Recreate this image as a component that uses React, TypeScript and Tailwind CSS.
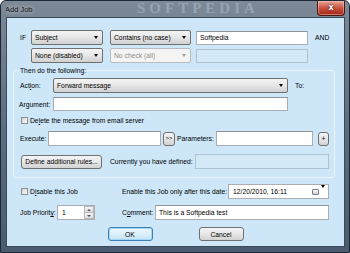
import React from "react";

// Windows 7 style "Add Job" dialog, scaled down to the screenshot size

type BoxProps = { className?: string; text?: React.ReactNode; disabled?: boolean };

function Arrow({ muted }: { muted?: boolean }) {
  return (
    <span
      className={`h-0 w-0 shrink-0 border-x-[2.5px] border-t-[3px] border-x-transparent ${
        muted ? "border-t-[#a0a0a0]" : "border-t-black"
      }`}
    />
  );
}

function Combo({ className, text, disabled }: BoxProps) {
  return (
    <div
      className={`flex h-[15px] shrink-0 items-center justify-between rounded-[2px] border pl-[3px] pr-[4px] ${
        disabled
          ? "border-[#b8bcc0] bg-[#f4f4f4] text-[#8d8d8d]"
          : "border-[#707070] bg-linear-to-b from-[#f4f4f4] via-[#e6e6e6] to-[#d0d0d0]"
      } ${className ?? ""}`}
    >
      <span className="truncate">{text}</span>
      <Arrow muted={disabled} />
    </div>
  );
}

function TextBox({ className, text, disabled }: BoxProps) {
  return (
    <div
      className={`flex h-[14px] shrink-0 items-center border pl-[3px] ${
        disabled ? "border-[#aec2d1] bg-[#d3e9f7]" : "border-[#abadb3] border-t-[#8f939a] bg-white"
      } ${className ?? ""}`}
    >
      {text}
    </div>
  );
}

function Button({
  className,
  children,
  primary,
}: {
  className?: string;
  children: React.ReactNode;
  primary?: boolean;
}) {
  return (
    <div
      className={`flex shrink-0 items-center justify-center rounded-[3px] border ${
        primary
          ? "border-[#3c7fb1] bg-linear-to-b from-[#f2f9fe] to-[#c4e3f5] shadow-[inset_0_0_0_1px_#9fd7f7]"
          : "border-[#707070] bg-linear-to-b from-[#f4f4f4] via-[#e7e7e7] to-[#d1d1d1]"
      } ${className ?? ""}`}
    >
      {children}
    </div>
  );
}

function Check() {
  return <span className="h-[7px] w-[7px] shrink-0 border border-[#8e8f8f] bg-linear-to-br from-[#d6d6d6] to-[#fafafa]" />;
}

export default function App() {
  return (
    <div className="flex h-[253px] w-[350px] flex-col overflow-hidden rounded-t-[6px] border border-[#1d2836] bg-linear-to-b from-[#7d8996] via-[#5d6d80] to-[#4a5b70] pb-[5px] pl-[5px] pr-[4px] font-['Liberation_Sans',Arial,sans-serif] text-[6.75px] leading-[9px] text-black">
      {/* title bar */}
      <div className="flex h-[16px] shrink-0 items-start overflow-hidden">
        <span className="-ml-[1px] w-[132px] shrink-0 pt-[4px] text-[7.5px] text-[#101010] [text-shadow:0_0_4px_rgba(255,255,255,0.9)]">
          Add Job
        </span>
        <span className="w-[150px] shrink-0 font-['Liberation_Serif',serif] text-[15px] leading-[15px] font-bold tracking-[4px] text-[#b8c8dc]/45">
          SOFTPEDIA
        </span>
        <div className="flex-1" />
        <div className="flex h-[15px] w-[28px] shrink-0 items-center justify-center rounded-b-[4px] border border-t-0 border-[#4a1710] bg-linear-to-b from-[#e7a79b] via-[#c8503f] to-[#a32514] shadow-[inset_0_0_0_1px_rgba(255,200,190,0.5)]">
          <span className="font-['DejaVu_Sans',sans-serif] text-[8px] leading-[8px] font-bold text-white [text-shadow:0_0_2px_#400]">
            x
          </span>
        </div>
      </div>

      {/* client area */}
      <div className="flex flex-1 flex-col border border-[#3a495b] bg-[#cde7f8] pt-[12px]">
        <div className="flex items-center pl-[13px]">
          <span className="w-[11px] shrink-0">IF</span>
          <Combo className="w-[72px]" text="Subject" />
          <Combo className="ml-[7px] w-[81px]" text="Contains (no case)" />
          <TextBox className="ml-[5px] w-[112px]" text="Softpedia" />
          <span className="ml-[7px]">AND</span>
        </div>
        <div className="mt-[3px] flex items-center pl-[24px]">
          <Combo className="w-[72px]" text="None (disabled)" />
          <Combo className="ml-[7px] w-[81px]" text="No check (all)" disabled />
          <TextBox className="ml-[5px] w-[112px]" disabled />
        </div>

        <fieldset className="ml-[6px] mt-[3px] w-[322px] rounded-[2px] border border-[#e9f4fb] pb-[8px]">
          <legend className="ml-[5px] px-[1px] leading-[9px]">Then do the following:</legend>
          <div className="mt-[3px] flex items-center pl-[6px]">
            <span className="w-[33px] shrink-0">
              Act<u>i</u>on:
            </span>
            <Combo className="h-[14px] w-[235px]" text="Forward message" />
            <span className="ml-[7px]">To:</span>
          </div>
          <div className="mt-[4px] flex items-center pl-[5px]">
            <span className="w-[34px] shrink-0">Argument:</span>
            <TextBox className="w-[235px]" />
          </div>
          <div className="mt-[5px] flex h-[9px] items-center pl-[7px]">
            <Check />
            <span className="ml-[2px]">
              De<u>l</u>ete the message from email server
            </span>
          </div>
          <div className="mt-[6px] flex items-center pl-[6px]">
            <span className="w-[28px] shrink-0">Execute:</span>
            <TextBox className="h-[15px] w-[113px]" />
            <Button className="ml-[2px] h-[14px] w-[12px] rounded-[2px] text-[6px]">&gt;&gt;</Button>
            <span className="ml-[2px] w-[39px] shrink-0">Parameters:</span>
            <TextBox className="h-[15px] w-[97px]" />
            <Button className="ml-[5px] h-[14px] w-[11px] rounded-[2px]">+</Button>
          </div>
          <div className="mt-[8px] flex items-center pl-[7px]">
            <Button className="h-[14px] w-[81px]">Define additional rules...</Button>
            <span className="ml-[8px] w-[85px] shrink-0">Currently you have defined:</span>
            <TextBox className="h-[15px] w-[134px]" disabled />
          </div>
        </fieldset>

        <div className="mt-[6px] flex items-center pl-[14px]">
          <div className="flex w-[101px] shrink-0 items-center">
            <Check />
            <span className="ml-[2px]">
              D<u>i</u>sable this Job
            </span>
          </div>
          <span className="w-[106px] shrink-0">Enable this Job only after this date:</span>
          <div className="flex h-[15px] w-[101px] items-center border border-[#abadb3] bg-white pl-[4px] pr-[3px]">
            <span>12/20/2010, 16:11</span>
            <div className="flex-1" />
            <span className="h-[6px] w-[7px] rounded-[1px] border border-[#7a8088] bg-linear-to-b from-[#ffffff] to-[#c9ced4]" />
            <span className="ml-[2px]">
              <Arrow />
            </span>
          </div>
        </div>

        <div className="mt-[6px] flex items-center pl-[13px]">
          <span className="w-[37px] shrink-0">
            Job Priorit<u>y</u>:
          </span>
          <div className="flex h-[15px] w-[38px] shrink-0 items-center border border-[#abadb3] bg-white pl-[4px]">
            <span className="flex-1">1</span>
            <div className="flex h-full w-[10px] flex-col">
              <div className="flex flex-1 items-center justify-center border border-[#b7babe] bg-linear-to-b from-[#f6f6f6] to-[#dcdcdc]">
                <span className="h-0 w-0 border-x-[2px] border-b-[2px] border-x-transparent border-b-[#555]" />
              </div>
              <div className="flex flex-1 items-center justify-center border border-t-0 border-[#b7babe] bg-linear-to-b from-[#f6f6f6] to-[#dcdcdc]">
                <span className="h-0 w-0 border-x-[2px] border-t-[2px] border-x-transparent border-t-[#555]" />
              </div>
            </div>
          </div>
          <span className="ml-[27px] w-[33px] shrink-0">
            C<u>o</u>mment:
          </span>
          <TextBox className="h-[15px] w-[174px]" text="This is a Softpedia test" />
        </div>

        <div className="mt-[7px] flex justify-center gap-[46px]">
          <Button className="h-[14px] w-[45px]" primary>
            OK
          </Button>
          <Button className="h-[14px] w-[45px]">Cancel</Button>
        </div>
      </div>
    </div>
  );
}
